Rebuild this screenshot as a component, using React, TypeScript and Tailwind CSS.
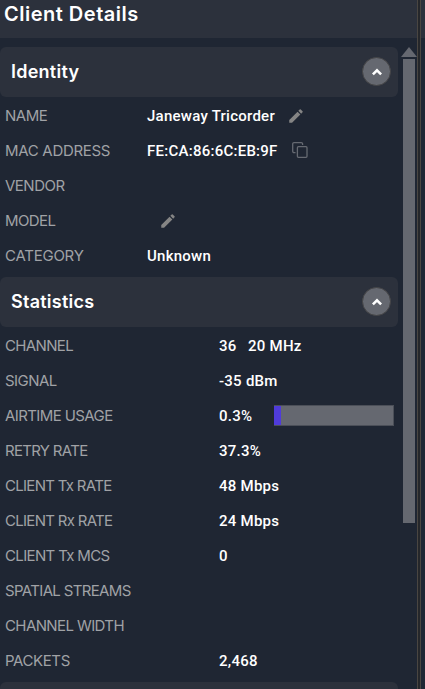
import type { ReactNode } from 'react';

interface Row {
    label: string;
    tracking: string;
    value?: ReactNode;
}

const PencilIcon = ({ className = '' }: { className?: string }) => (
    <svg viewBox="0 0 24 24" className={`w-[18px] h-[18px] mb-0.5 fill-[#858585] ${className}`}>
        <path d="M3 17.25V21h3.75L17.81 9.94l-3.75-3.75L3 17.25zM20.71 7.04a1 1 0 0 0 0-1.41l-2.34-2.34a1 1 0 0 0-1.41 0l-1.83 1.83 3.75 3.75 1.83-1.83z" />
    </svg>
);

const CopyIcon = () => (
    <svg viewBox="0 0 16 16" className="w-4 h-4 ml-[13px] mb-[3px] fill-none stroke-[#666a72]" strokeWidth="1.3">
        <path d="M3.5 10.6H2A1.3 1.3 0 0 1 .7 9.3V2A1.3 1.3 0 0 1 2 .7h7.3A1.3 1.3 0 0 1 10.6 2v1" />
        <rect x="5.4" y="4.7" width="9.6" height="10.6" rx="1" />
    </svg>
);

const identity: Row[] = [
    { label: 'NAME', tracking: 'tracking-[-0.5px]', value: <><span className="w-[128px]">Janeway Tricorder</span><PencilIcon className="ml-3" /></> },
    { label: 'MAC ADDRESS', tracking: 'tracking-[-0.3px]', value: <><span className="w-[132px]">FE:CA:86:6C:EB:9F</span><CopyIcon /></> },
    { label: 'VENDOR', tracking: 'tracking-[-0.5px]' },
    { label: 'MODEL', tracking: 'tracking-[-0.6px]', value: <PencilIcon className="ml-3" /> },
    { label: 'CATEGORY', tracking: 'tracking-[-0.25px]', value: 'Unknown' },
];

const statistics: Row[] = [
    { label: 'CHANNEL', tracking: 'tracking-[-0.65px]', value: <><span className="w-[29px]">36</span>20 MHz</> },
    { label: 'SIGNAL', tracking: 'tracking-[-0.55px]', value: '-35 dBm' },
    {
        label: 'AIRTIME USAGE',
        tracking: 'tracking-[-0.6px]',
        value: (
            <>
                <span className="w-[55px]">0.3%</span>
                <span className="w-[120px] h-[21px] mb-0.5 bg-[#656870] border-y border-r border-[#4b4f58]">
                    <span className="block w-[7px] h-full bg-[#4f3bdb]" />
                </span>
            </>
        ),
    },
    { label: 'RETRY RATE', tracking: 'tracking-[-0.7px]', value: '37.3%' },
    { label: 'CLIENT Tx RATE', tracking: 'tracking-[-0.7px]', value: '48 Mbps' },
    { label: 'CLIENT Rx RATE', tracking: 'tracking-[-0.7px]', value: '24 Mbps' },
    { label: 'CLIENT Tx MCS', tracking: 'tracking-[-0.65px]', value: '0' },
    { label: 'SPATIAL STREAMS', tracking: 'tracking-[-0.65px]' },
    { label: 'CHANNEL WIDTH', tracking: 'tracking-[-0.6px]' },
    { label: 'PACKETS', tracking: 'tracking-[-0.4px]', value: '2,468' },
];

function SectionHeader({ title }: { title: string }) {
    return (
        <div className="h-[50px] shrink-0 flex items-center justify-between pl-[11px] pr-[7px] pb-px rounded-md bg-[#2c313c]">
            <h2 className="text-[18px] font-semibold tracking-[0.25px] text-white">{title}</h2>
            <button className="w-[29px] h-[29px] rounded-full bg-[#656870] border border-[#444446] flex items-center justify-center">
                <svg viewBox="0 0 12 8" className="w-3 h-2 fill-none stroke-white" strokeWidth="2.6">
                    <path d="M1.9 6.4 6 2.4l4.1 4" />
                </svg>
            </button>
        </div>
    );
}

function Rows({ rows, labelWidth }: { rows: Row[]; labelWidth: string }) {
    return (
        <dl className="pt-0.5 pb-[3px]">
            {rows.map(r => (
                <div key={r.label} className="h-[35px] flex items-center pl-[5px]">
                    <dt className={`${labelWidth} shrink-0 text-[15px] text-[#a0a2a6] ${r.tracking}`}>{r.label}</dt>
                    <dd className="flex items-center whitespace-nowrap font-['Roboto'] font-medium text-[15px] tracking-[0.25px] text-white">{r.value}</dd>
                </div>
            ))}
        </dl>
    );
}

export default function App() {
    return (
        <div className="w-[425px] h-[689px] flex overflow-hidden bg-[#1f2633] font-['Inter',sans-serif]">
            <div className="w-[417px] flex flex-col">
                <header className="h-[38px] shrink-0 pl-1 bg-[#2c313c]">
                    <h1 className="text-[20px] leading-[28px] font-semibold tracking-[0.5px] text-white">Client Details</h1>
                </header>
                <div className="flex-1 min-h-0 pt-[9px] flex">
                    <div className="w-[398px] flex flex-col overflow-hidden">
                        <SectionHeader title="Identity" />
                        <Rows rows={identity} labelWidth="w-[142px]" />
                        <SectionHeader title="Statistics" />
                        <Rows rows={statistics} labelWidth="w-[214px]" />
                        <div className="h-[50px] shrink-0 rounded-md bg-[#2c313c]" />
                    </div>
                    <div className="w-[19px] flex flex-col items-center pl-[3px]">
                        <svg viewBox="0 0 16 10" className="w-4 h-[10px] fill-[#656870]">
                            <path d="M0 10 8 0l8 10z" />
                        </svg>
                        <div className="mt-[2px] mr-[1px] w-3 h-[464px] bg-[#656870]" />
                    </div>
                </div>
            </div>
            <div className="w-1 bg-[#25272b] border-x border-[#4a4642]" />
            <div className="flex-1">
                <div className="h-[38px] bg-[#2c313c]" />
            </div>
        </div>
    );
}
